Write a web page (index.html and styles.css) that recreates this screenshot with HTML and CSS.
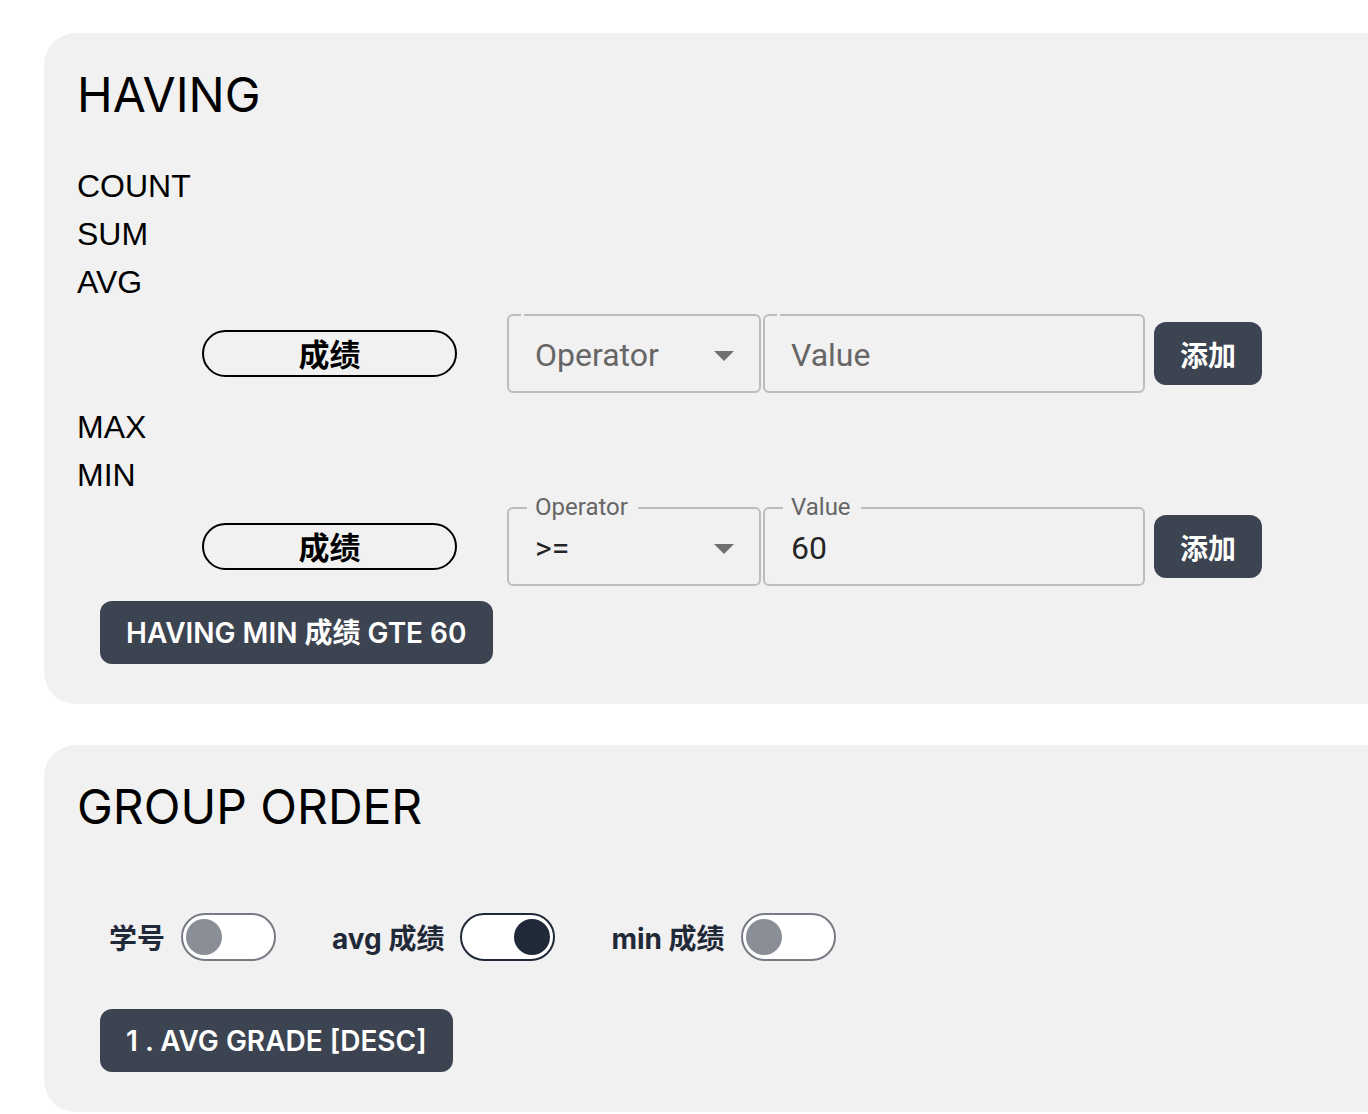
FILE: index.html
```html
<!DOCTYPE html>
<html lang="zh-CN">
<head>
<meta charset="utf-8">
<title>Query Builder</title>
<link rel="stylesheet" href="styles.css">
</head>
<body>
<div class="page">
  <section class="card">
    <h2 class="card-title">HAVING</h2>
    <ul class="agg-list">
      <li class="agg">COUNT</li>
      <li class="agg">SUM</li>
      <li class="agg">AVG
        <div class="cond-row">
          <span class="col-pill">成绩</span>
          <div class="field field-select">
            <span class="notch-gap"></span>
            <span class="field-text placeholder">Operator</span>
            <svg class="caret" viewBox="0 0 24 24" width="48" height="48"><path d="M7 10l5 5 5-5z"/></svg>
          </div>
          <div class="field field-value">
            <span class="notch-gap"></span>
            <span class="field-text placeholder">Value</span>
          </div>
          <button class="btn btn-add">添加</button>
        </div>
      </li>
      <li class="agg">MAX</li>
      <li class="agg">MIN
        <div class="cond-row">
          <span class="col-pill">成绩</span>
          <div class="field field-select">
            <span class="float-label">Operator</span>
            <span class="field-text">&gt;=</span>
            <svg class="caret" viewBox="0 0 24 24" width="48" height="48"><path d="M7 10l5 5 5-5z"/></svg>
          </div>
          <div class="field field-value">
            <span class="float-label">Value</span>
            <span class="field-text">60</span>
          </div>
          <button class="btn btn-add">添加</button>
        </div>
      </li>
    </ul>
    <div class="result">
      <button class="btn">HAVING MIN 成绩 GTE 60</button>
    </div>
  </section>

  <section class="card">
    <h2 class="card-title">GROUP ORDER</h2>
    <div class="toggles">
      <label class="toggle-item"><span class="toggle-label">学号</span><span class="toggle"><span class="knob"></span></span></label>
      <label class="toggle-item"><span class="toggle-label">avg 成绩</span><span class="toggle on"><span class="knob"></span></span></label>
      <label class="toggle-item"><span class="toggle-label">min 成绩</span><span class="toggle"><span class="knob"></span></span></label>
    </div>
    <div class="result">
      <button class="btn">1 . AVG GRADE [DESC]</button>
    </div>
  </section>
</div>
</body>
</html>
```

FILE: styles.css
```css
html, body {
  margin: 0;
  padding: 0;
  background: #ffffff;
  overflow: hidden;
}

.page {
  padding: 33px 0 0 44px;
  font-family: "Liberation Sans", Arial, "Noto Sans CJK SC", sans-serif;
  color: #000;
}

.card {
  background: #f1f1f1;
  border-radius: 32px;
  margin-right: -60px;
  margin-bottom: 41px;
  padding: 33px 32px 40px 33px;
}

.card-title {
  margin: 0 0 38px;
  font-family: Inter, "Liberation Sans", sans-serif;
  font-size: 48px;
  font-weight: 400;
  line-height: 58px;
}

.agg-list {
  list-style: none;
  margin: 0;
  padding: 0;
}

.agg {
  font-size: 32px;
  line-height: 48px;
}

.cond-row {
  display: flex;
  align-items: center;
  padding-left: 125px;
  margin: 8px 0 10px;
}

.col-pill {
  box-sizing: border-box;
  width: 255px;
  height: 47px;
  border: 2px solid #000;
  border-radius: 9999px;
  display: flex;
  align-items: center;
  justify-content: center;
  padding-bottom: 3px;
  font-family: "Noto Sans CJK SC", sans-serif;
  font-weight: 700;
  font-size: 31px;
  line-height: 1;
  margin-right: 50px;
}

.field {
  position: relative;
  box-sizing: border-box;
  height: 79px;
  border: 2px solid #bdbdbd;
  border-radius: 6px;
  display: flex;
  align-items: center;
  padding: 3px 0 0 26px;
  font-family: Roboto, "Noto Sans", sans-serif;
  font-size: 32px;
  color: rgba(0, 0, 0, 0.87);
}

.field-select {
  width: 254px;
  margin-right: 2px;
}

.field-value {
  width: 382px;
  margin-right: 9px;
}

.field-text {
  flex: 1;
  line-height: 1.2;
}

.placeholder {
  color: #666666;
}

.caret {
  fill: #707070;
  margin-right: 11px;
  flex: none;
}

.notch-gap {
  position: absolute;
  left: 12px;
  top: -2px;
  width: 3px;
  height: 2px;
  background: #f1f1f1;
}

.float-label {
  position: absolute;
  left: 18px;
  top: -14px;
  padding: 0 10px 0 8px;
  background: #f1f1f1;
  font-size: 24px;
  line-height: 24px;
  color: #666666;
}

.btn {
  display: inline-flex;
  align-items: center;
  justify-content: center;
  box-sizing: border-box;
  height: 63px;
  padding: 0 26px;
  border: none;
  border-radius: 12px;
  background: #3d4451;
  color: #ffffff;
  font-family: Inter, "Noto Sans CJK SC", sans-serif;
  font-weight: 600;
  font-size: 28px;
  line-height: 1;
}

.btn-add {
  font-family: "Noto Sans CJK SC", sans-serif;
  font-weight: 700;
}

.result {
  margin-top: 15px;
  padding-left: 23px;
}

.toggles {
  display: flex;
  align-items: center;
  gap: 56px;
  padding: 39px 0 0 32px;
  margin-bottom: 48px;
}

.toggles + .result {
  margin-top: 0;
}

.toggle-item {
  display: flex;
  align-items: center;
  gap: 16px;
}

.toggle-label {
  font-family: Inter, "Noto Sans CJK SC", sans-serif;
  font-weight: 700;
  font-size: 28px;
  color: #1f2937;
}

.toggle {
  box-sizing: border-box;
  width: 95px;
  height: 48px;
  border: 2px solid #767b84;
  border-radius: 9999px;
  background: #ffffff;
  display: flex;
  align-items: center;
  justify-content: flex-start;
  padding: 0 3px;
}

.knob {
  width: 36px;
  height: 36px;
  border-radius: 50%;
  background: #8a8e96;
}

.toggle.on {
  border-color: #1f2937;
  justify-content: flex-end;
}

.toggle.on .knob {
  background: #1f2937;
}
```
